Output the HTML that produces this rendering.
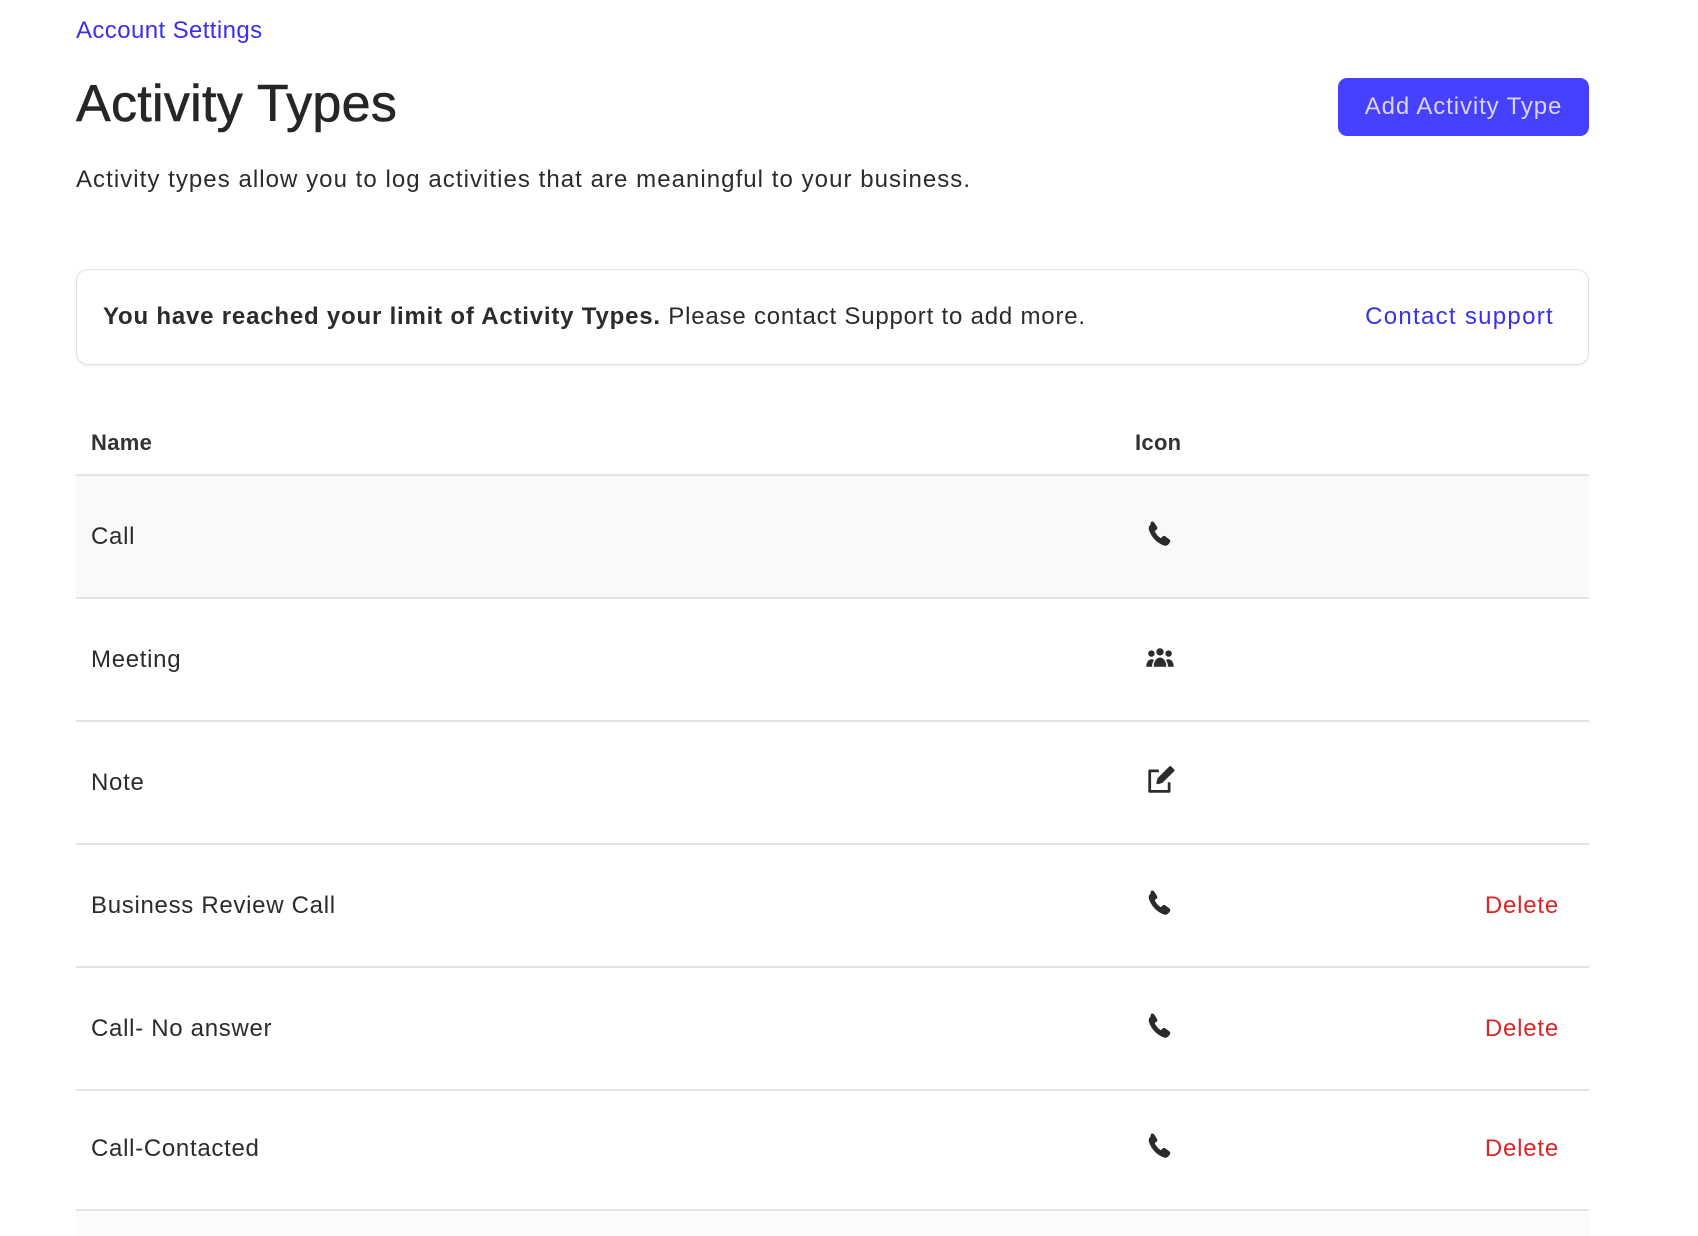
<!DOCTYPE html>
<html><head><meta charset="utf-8"><style>
*{margin:0;padding:0;box-sizing:border-box}
body{width:1698px;height:1236px;background:#fff;font-family:"Liberation Sans",sans-serif;color:#2b2b2b;position:relative;overflow:hidden}
.abs{position:absolute}
.link{color:#3a2ff0}
.row{position:absolute;left:76px;width:1513px;height:123px;border-bottom:2px solid #e4e4e2}
.row .n{position:absolute;left:15px;top:0;line-height:121px;font-size:24px;letter-spacing:0.7px}
.row .i{position:absolute;left:1068px;top:42px;width:32px;height:32px}
.row .d{position:absolute;right:30px;top:0;line-height:121px;font-size:24px;color:#dc2626;letter-spacing:0.8px}
</style></head><body>
<div class="abs link" style="left:76px;top:17px;font-size:24px;letter-spacing:0.4px">Account Settings</div>
<div class="abs" style="left:76px;top:74px;font-size:52px;letter-spacing:0.3px;color:#262626;-webkit-text-stroke:0.6px #262626">Activity Types</div>
<div class="abs" style="left:1338px;top:78px;width:251px;height:58px;background:#4640ff;border-radius:9px;color:#d8d6ff;font-size:24px;line-height:58px;text-align:center;letter-spacing:0.9px">Add Activity Type</div>
<div class="abs" style="left:76px;top:166px;font-size:24px;letter-spacing:1.05px">Activity types allow you to log activities that are meaningful to your business.</div>
<div class="abs" style="left:76px;top:269px;width:1513px;height:96px;border:1.5px solid #e2e2e2;border-radius:12px;box-shadow:0 1px 2px rgba(0,0,0,.08)">
<div class="abs" style="left:26px;top:0;line-height:93px;font-size:24px;letter-spacing:0.8px"><b>You have reached your limit of Activity Types.</b> Please contact Support to add more.</div>
<div class="abs link" style="right:34px;top:0;line-height:93px;font-size:24px;letter-spacing:1.3px">Contact support</div>
</div>
<div class="abs" style="left:76px;top:420px;width:1513px;height:56px;border-bottom:2px solid #e4e4e2">
<div class="abs" style="left:15px;top:10px;font-size:22px;font-weight:bold;color:#333;letter-spacing:0.3px">Name</div>
<div class="abs" style="left:1059px;top:10px;font-size:22px;font-weight:bold;color:#333;letter-spacing:0.3px">Icon</div>
</div>
<svg width="0" height="0" style="position:absolute"><defs>
<symbol id="ph" viewBox="0 0 28 28"><path d="M6 3.5c1.2-.8 2.3-.6 3 .5l2.4 3.8c.6 1 .3 2-.6 2.6l-1.4 1c1 2.6 3 4.9 5.5 6.3l1.1-1.3c.7-.8 1.8-1 2.7-.3l3.5 2.6c1 .8 1.1 1.900.3 3l-1.3 1.5c-1 1.1-2.6 1.4-4.1.8C11 21.6 6.2 16.5 4.3 10.3 3.8 8.7 4.3 7 5.6 6z" fill="#2b2b2b"/></symbol>
</defs></svg>
<div class="row" style="top:476px;background:#f9f9f8"><span class="n">Call</span><svg class="i"><use href="#ph"/></svg></div>
<div class="row" style="top:599px"><span class="n">Meeting</span>
<svg class="i" viewBox="0 0 28 28"><g fill="#2b2b2b"><circle cx="14" cy="9.5" r="3.2"/><circle cx="6.5" cy="11" r="2.8"/><circle cx="21.5" cy="11" r="2.8"/><path d="M8.5 22.5c0-4.5 2.2-8 5.5-8s5.5 3.5 5.5 8z"/><path d="M2 22.5c0-3.5 1.7-6.500 4.500-6.500 1 0 1.700.3 2.200.8-1.100 1.700-1.700 3.600-1.700 5.700z"/><path d="M26 22.5c0-3.5-1.7-6.5-4.5-6.5-1 0-1.7.3-2.2.8 1.1 1.7 1.7 3.6 1.7 5.7z"/></g></svg></div>
<div class="row" style="top:722px"><span class="n">Note</span>
<svg class="i" viewBox="0 0 28 28"><g fill="none" stroke="#2b2b2b" stroke-width="2.4" stroke-linejoin="round"><path d="M13 6H5v18h17v-8"/><path d="M23 3l2.5 2.5-10 10-3.5 1 1-3.5z" fill="#2b2b2b"/></g></svg></div>
<div class="row" style="top:845px"><span class="n">Business Review Call</span><svg class="i"><use href="#ph"/></svg><span class="d">Delete</span></div>
<div class="row" style="top:968px"><span class="n">Call- No answer</span><svg class="i"><use href="#ph"/></svg><span class="d">Delete</span></div>
<div class="row" style="top:1088px"><span class="n">Call-Contacted</span><svg class="i"><use href="#ph"/></svg><span class="d">Delete</span></div>
<div class="abs" style="left:76px;top:1211px;width:1513px;height:25px;background:#fbfbfa"></div>
</body></html>
